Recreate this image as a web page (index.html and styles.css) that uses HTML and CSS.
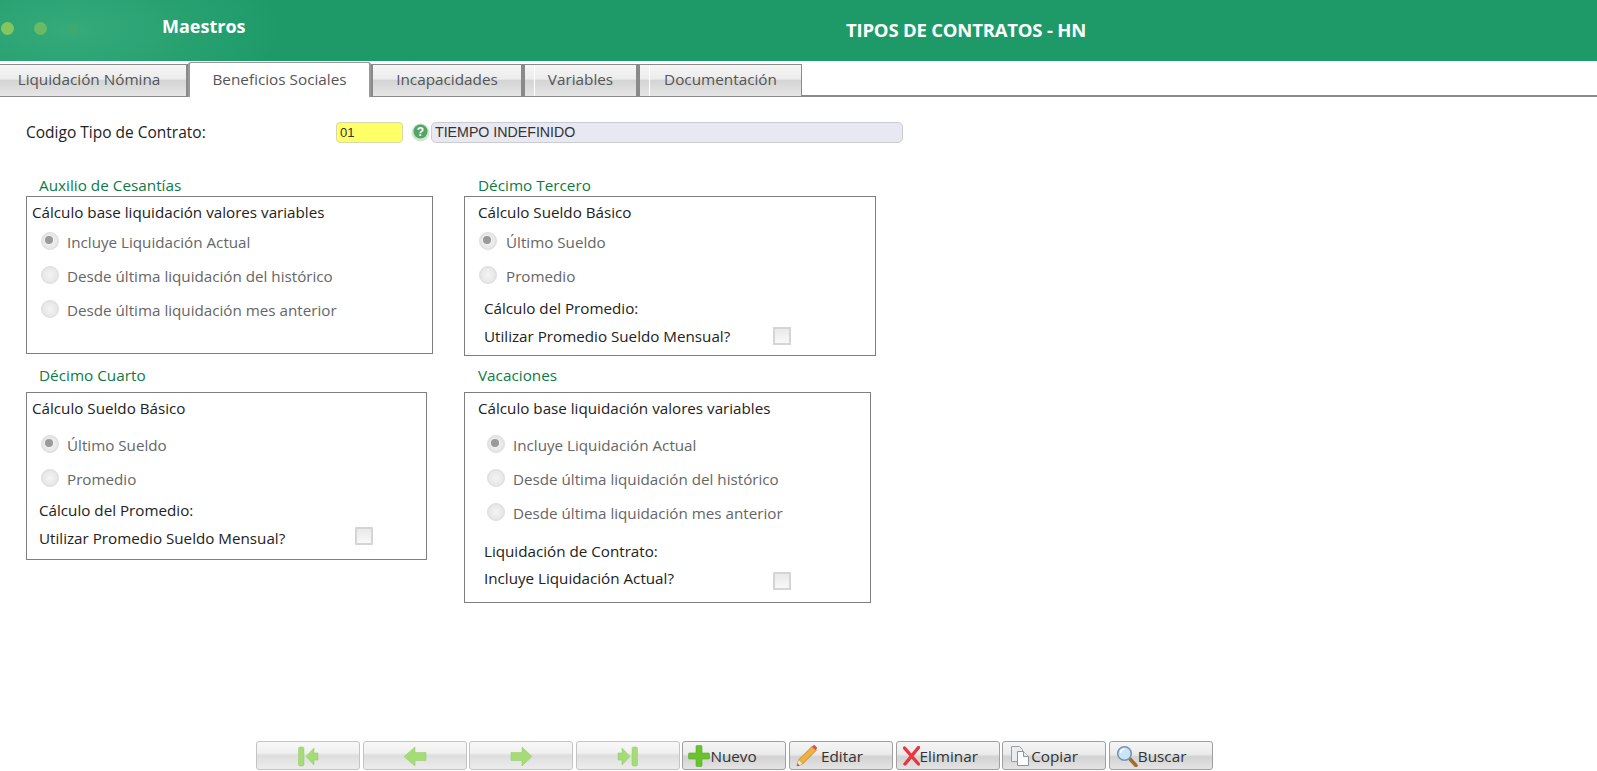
FILE: index.html
```html
<!DOCTYPE html>
<html lang="es">
<head>
<meta charset="utf-8">
<title>Tipos de contratos</title>
<link rel="stylesheet" href="styles.css">
</head>
<body>
<div class="page">
  <header class="top">
    <div class="brand">
      <div class="dots"><i class="dot d1"></i><i class="dot d2"></i><i class="dot d3"></i></div>
      <span class="brand-name">Maestros</span>
    </div>
    <h1 class="title">TIPOS DE CONTRATOS - HN</h1>
  </header>
  <nav class="tabs">
    <span class="tab first">Liquidación Nómina</span>
    <span class="tab active">Beneficios Sociales</span>
    <span class="tab t3">Incapacidades</span>
    <span class="tab t4">Variables</span>
    <span class="tab t5">Documentación</span>
  </nav>
  <main class="content">
    <div class="code-row">
      <label class="code-label">Codigo Tipo de Contrato:</label>
      <span class="code-input">01</span>
      <svg class="help" width="19" height="19" viewBox="0 0 19 19"><circle cx="9.5" cy="9.5" r="9" fill="#cfe6d2"/><circle cx="9.5" cy="8.5" r="7" fill="#54a468"/><text x="9.5" y="13" text-anchor="middle" class="help-q">?</text></svg>
      <span class="desc-input">TIEMPO INDEFINIDO</span>
    </div>
    <div class="cols">
      <div class="col col-l">
        <section class="group g1">
          <h2 class="legend">Auxilio de Cesantías</h2>
          <div class="box b1">
            <p class="sub">Cálculo base liquidación valores variables</p>
            <div class="radio on">Incluye Liquidación Actual</div>
            <div class="radio">Desde última liquidación del histórico</div>
            <div class="radio">Desde última liquidación mes anterior</div>
          </div>
        </section>
        <section class="group g3">
          <h2 class="legend up">Décimo Cuarto</h2>
          <div class="box b3">
            <p class="sub">Cálculo Sueldo Básico</p>
            <div class="radio on r-t">Último Sueldo</div>
            <div class="radio">Promedio</div>
            <p class="sub indent">Cálculo del Promedio:</p>
            <div class="check-row w3"><span>Utilizar Promedio Sueldo Mensual?</span><i class="check"></i></div>
          </div>
        </section>
      </div>
      <div class="col col-r">
        <section class="group g2">
          <h2 class="legend">Décimo Tercero</h2>
          <div class="box b2">
            <p class="sub">Cálculo Sueldo Básico</p>
            <div class="radio on">Último Sueldo</div>
            <div class="radio">Promedio</div>
            <p class="sub indent">Cálculo del Promedio:</p>
            <div class="check-row w2"><span>Utilizar Promedio Sueldo Mensual?</span><i class="check"></i></div>
          </div>
        </section>
        <section class="group g4">
          <h2 class="legend up">Vacaciones</h2>
          <div class="box b4">
            <p class="sub">Cálculo base liquidación valores variables</p>
            <div class="radio on r-t shift">Incluye Liquidación Actual</div>
            <div class="radio shift">Desde última liquidación del histórico</div>
            <div class="radio shift">Desde última liquidación mes anterior</div>
            <p class="sub indent gap-t">Liquidación de Contrato:</p>
            <div class="check-row w4"><span>Incluye Liquidación Actual?</span><i class="check"></i></div>
          </div>
        </section>
      </div>
    </div>
  </main>
  <footer class="toolbar">
    <button class="btn"><svg width="24" height="22" viewBox="0 0 24 22"><rect x="2.5" y="2" width="5.5" height="19" rx="1.5" class="nav"/><path d="M10 11.5L18 3v5h4v7h-4v5z" class="nav"/></svg></button>
    <button class="btn"><svg width="24" height="22" viewBox="0 0 24 22"><path d="M1 11.5L12 2v5.5h11v8H12V21z" class="nav"/></svg></button>
    <button class="btn"><svg width="24" height="22" viewBox="0 0 24 22"><path d="M23 11.5L13 2v5.5H2v8h11V21z" class="nav"/></svg></button>
    <button class="btn"><svg width="24" height="22" viewBox="0 0 24 22"><rect x="16" y="2" width="5.5" height="19" rx="1.5" class="nav"/><path d="M14 11.5L6 3v5H2v7h4v5z" class="nav"/></svg></button>
    <button class="btn txt p-new"><svg width="22" height="22" viewBox="0 0 22 22"><path d="M8 1.5c0-.5.4-1 1-1h4c.6 0 1 .5 1 1V8h6.500c.5 0 1 .4 1 1v4c0 .6-.5 1-1 1H14v6.500c0 .5-.4 1-1 1H9c-.6 0-1-.5-1-1V14H1.500c-.5 0-1-.4-1-1V9c0-.6.5-1 1-1H8z" fill="#69c22e" stroke="#55ad22" stroke-width=".6"/></svg>Nuevo</button>
    <button class="btn txt p-edit"><svg width="22" height="22" viewBox="0 0 22 22"><path d="M1 21l1.500-6L16 1.500l4 4L6.500 19z" fill="#f2b13f" stroke="#a8742a" stroke-width=".7"/><path d="M16 1.500l1.500-1.200c.5-.3 1-.3 1.500.1l1.800 1.800c.4.500.3 1 0 1.400L20 5.500z" fill="#d8505a"/><path d="M1 21l1.500-6 4 4z" fill="#f7e2c2"/><path d="M1 21l.6-2.500 1.900 1.900z" fill="#555"/></svg>Editar</button>
    <button class="btn txt p-del"><svg width="17" height="20" viewBox="0 0 17 20"><path d="M1.500 2l14 16M15.500 1.500L2 18" stroke="#e8363c" stroke-width="3.400" stroke-linecap="round" fill="none"/></svg>Eliminar</button>
    <button class="btn txt p-copy"><svg width="21" height="22" viewBox="0 0 21 22"><path d="M1.500 1.500h8l3 3v12h-11z" fill="#e9edf0" stroke="#9a9fa3"/><path d="M7.500 6.500h6l5 5v9h-11z" fill="#fbfcfd" stroke="#8f9498"/><path d="M13.500 6.500v5h5" fill="#e6eaee" stroke="#8f9498"/></svg>Copiar</button>
    <button class="btn txt p-find"><svg width="22" height="22" viewBox="0 0 22 22"><path d="M14 14l6 6.500" stroke="#a16d2d" stroke-width="3.600" stroke-linecap="round"/><circle cx="8.500" cy="8.500" r="6.800" fill="#c9e3f8" stroke="#7694b2" stroke-width="1.600"/><path d="M4.500 8a4 4 0 0 1 4-4" stroke="#fff" stroke-width="1.500" fill="none"/></svg>Buscar</button>
  </footer>
</div>
</body>
</html>
```
FILE: styles.css
```css
* { box-sizing: border-box; }
html, body { margin: 0; height: 100%; }
body { background: #fff; font-family: "Open Sans", "Noto Sans", sans-serif; font-size: 15.2px; color: #222; overflow: hidden; }
.page { height: 771px; display: flex; flex-direction: column; }

.top { height: 61px; flex: none; display: flex; align-items: center; background: #1e9a69; background-image: radial-gradient(ellipse 210px 90px at 70px 30px, #35aa7b 0, #1e9a69 100%); }
.brand { width: 680px; display: flex; align-items: center; }
.dots { display: flex; gap: 20px; width: 161px; margin: -5px 0 0 1px; }
.dot { width: 13px; height: 13px; border-radius: 50%; display: block; }
.d1 { background: #86c55c; }
.d2 { background: #68ba63; }
.d3 { background: #3ba970; }
.brand-name { color: #fff; font-weight: 700; font-size: 18px; margin-top: -9px; }
.title { margin: -2px 0 0 166px; color: #fff; font-size: 18.500px; font-weight: 700; letter-spacing: -.2px; }

.tabs { height: 36px; flex: none; display: flex; align-items: flex-end; border-bottom: 2px solid #8a8a8a; }
.tab { height: 32px; margin-bottom: -1px; padding-bottom: 3px; display: flex; align-items: center; justify-content: center; font-size: 15.300px; color: #555; border: 1px solid #8a8a8a; border-width: 1px 2px 0 2px; background: linear-gradient(#f6f6f6 0, #ececec 45%, #d4d4d4 50%, #e6e6e6 100%); position: relative; }
.first { width: 188px; border-left: 0; padding-right: 8px; }
.active { width: 183px; height: 35px; margin-bottom: -2px; background: #fff; border-radius: 3px 3px 0 0; border-color: #999; }
.t3 { width: 152px; }
.t4 { width: 115px; }
.t5 { width: 164px; border-width: 1px 1px 0 2px; }
.t4::before, .t5::before { content: ""; position: absolute; left: 9px; top: 0; bottom: 0; width: 1px; background: #fff; }

.content { flex: 1; padding: 0 0 0 26px; }
.code-row { display: flex; align-items: center; height: 22px; margin-top: 24px; }
.code-label { width: 310px; color: #222; font-size: 15.500px; }
.code-input { width: 67px; height: 21px; border: 1px solid #d8d8b0; border-radius: 4px; background: #ffff66; font: 13px "Liberation Sans", sans-serif; color: #333; display: flex; align-items: center; padding-left: 3px; }
.help { margin-left: 8px; flex: none; }
.help-q { font: 700 12px "Liberation Sans", sans-serif; fill: #fff; }
.desc-input { width: 472px; height: 21px; margin-left: 1px; border: 1px solid #ccc; border-radius: 5px; background: #e8e8f2; font: 14.200px "Liberation Sans", sans-serif; color: #333; display: flex; align-items: center; padding-left: 3px; }

.cols { display: flex; margin-top: 33px; }
.col { display: flex; flex-direction: column; }
.col-l { width: 438px; }
.legend { margin: 0 0 0 13px; height: 20px; line-height: 19px; font-size: 15.300px; font-weight: 400; color: #0e7a45; }
.col-r .legend { margin-left: 14px; }
.legend.up { height: 26px; }
.box { border: 1px solid #7f7f7f; padding: 5px 6px 0; }
.b1 { width: 407px; height: 158px; padding-left: 5px; }
.b2 { width: 412px; height: 160px; padding-left: 13px; }
.b3 { width: 401px; height: 168px; padding-left: 5px; }
.b4 { width: 407px; height: 211px; padding-left: 13px; }
.g3 { margin-top: 12px; }
.g4 { margin-top: 10px; }
.sub { margin: 0; height: 20px; line-height: 20px; color: #222; }
.indent { margin-left: 6px; margin-top: 5px; }
.b3 .indent { margin-left: 7px; margin-top: 4px; }
.gap-t { margin-top: 11px; }
.radio { height: 34px; display: flex; align-items: center; color: #666; padding-left: 34px; position: relative; }
.b1 .radio, .b3 .radio { margin-left: 1px; }
.sub + .radio { margin-top: 3px; }
.sub + .radio.r-t { margin-top: 10px; }
.b2 .radio { margin-left: -7px; padding-left: 35px; }
.shift { padding-left: 35px; }
.radio::before { content: ""; position: absolute; left: 8px; top: 7px; width: 16px; height: 16px; border-radius: 50%; background: radial-gradient(circle, #f4f4f4 0, #e8e8e8 60%, #d2d2d2 100%); border: 1px solid #ddd; }
.shift::before { left: 9px; }
.radio.on::after { content: ""; position: absolute; left: 12px; top: 11px; width: 8px; height: 8px; border-radius: 50%; background: #9a9a9a; }
.shift.on::after { left: 13px; }
.check-row { display: flex; align-items: center; margin: 7px 0 0 6px; height: 22px; position: relative; }
.check { position: absolute; width: 18px; height: 18px; border: 2px solid #d5d5d5; background: linear-gradient(#e9e9e9, #f8f8f8); display: block; }
.w2 .check { left: 289px; top: 2px; }
.w3 { margin-left: 7px; }
.w3 .check { left: 316px; top: 0; }
.w4 { margin-top: 6px; }
.w4 .check { left: 289px; top: 5px; }

.toolbar { flex: none; height: 29px; margin: auto 0 1px; padding-left: 256px; display: flex; gap: 2.600px; }
.btn { width: 104px; height: 29px; padding: 0; display: flex; align-items: center; justify-content: center; border: 1px solid #c4c4c4; border-radius: 3px; background: linear-gradient(#f8f8f8 0, #f0f0f0 40%, #dedede 50%, #ececec 100%); font: 15.300px "Open Sans", sans-serif; color: #333; }
.txt { border-color: #a0a0a0; background: linear-gradient(#f5f5f5 0, #ebebeb 45%, #d2d2d2 55%, #e4e4e4 100%); justify-content: flex-start; }
.p-new { padding-left: 5px; }
.p-edit { padding-left: 6px; gap: 3px; }
.p-del { padding-left: 6px; }
.p-copy { padding-left: 7px; }
.p-find { padding-left: 6px; }
.nav { fill: #a5dc78; stroke: #8fce62; stroke-width: .5; }
```
